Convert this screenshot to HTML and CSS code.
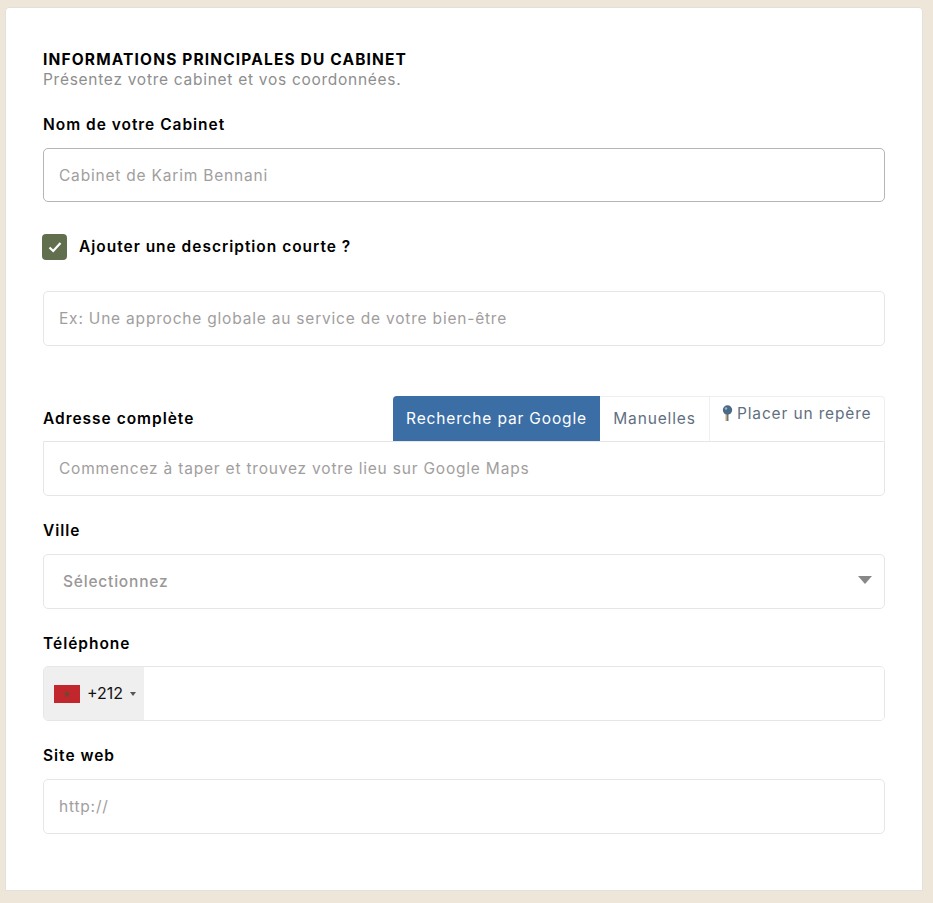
FILE: index.html
```html
<!DOCTYPE html>
<html lang="fr">

<head>
 <meta charset="UTF-8">
 <meta name="viewport" content="width=device-width, initial-scale=1.0">
 <title>Informations du cabinet</title>
 <link rel="stylesheet" href="styles.css">
</head>

<body>

 <form class="card">
  <header class="intro">
   <h2>INFORMATIONS PRINCIPALES DU CABINET</h2>
   <p>Présentez votre cabinet et vos coordonnées.</p>
  </header>

  <label class="label label-name" for="name">Nom de votre Cabinet</label>
  <input class="field field-strong" id="name" type="text" placeholder="Cabinet de Karim Bennani">

  <div class="check-row">
   <span class="check">
    <svg width="14" height="12" viewBox="0 0 14 12"><path d="M1.5 6.5 5.2 10 12.5 2" fill="none" stroke="#fff" stroke-width="2.2"/></svg>
   </span>
   <span class="label">Ajouter une description courte ?</span>
  </div>

  <input class="field" type="text" placeholder="Ex: Une approche globale au service de votre bien-être">

  <div class="address-head">
   <span class="label">Adresse complète</span>
   <div class="tabs">
    <span class="tab tab-active">Recherche par Google</span>
    <span class="tab tab-manual">Manuelles</span>
    <span class="tab tab-pin">
     <svg width="11" height="17" viewBox="0 0 11 17"><rect x="3.5" y="8" width="1.5" height="8" fill="#e2a04e"/><rect x="5" y="8" width="1.5" height="8" fill="#4f7fa8"/><circle cx="5.5" cy="5" r="4.7" fill="#4a6a85"/><circle cx="4" cy="3.5" r="1.2" fill="#9db6cb"/></svg>
     Placer un repère
    </span>
   </div>
  </div>
  <input class="field field-address" type="text" placeholder="Commencez à taper et trouvez votre lieu sur Google Maps">

  <label class="label label-row" for="city">Ville</label>
  <div class="select-wrap">
   <select class="field field-select" id="city">
    <option>Sélectionnez</option>
   </select>
   <span class="select-arrow"></span>
  </div>

  <label class="label label-row label-phone" for="phone">Téléphone</label>
  <div class="phone">
   <div class="dial">
    <span class="flag">
     <svg width="8" height="8" viewBox="0 0 10 10"><path d="M5 .5 6.2 3.6 9.5 3.8 6.9 5.9 7.8 9.2 5 7.3 2.2 9.2 3.1 5.9.5 3.8 3.8 3.6Z" fill="#6b4a30"/></svg>
    </span>
    <span class="dial-code">+212</span>
    <span class="dial-arrow"></span>
   </div>
   <input id="phone" type="tel">
  </div>

  <label class="label label-row" for="web">Site web</label>
  <input class="field" id="web" type="text" placeholder="http://">
 </form>

</body>

</html>
```

FILE: styles.css
```css
:root {
 --main-font: "Inter", "Open Sans", sans-serif;
 --line-color: #e6e6e6;
 --hint-color: #a19e9e;
}

html {
 box-sizing: border-box;
 font-family: var(--main-font);
}

*,
*::before,
*::after {
 box-sizing: inherit;
}

body {
 margin: 0;
 height: 903px;
 padding: 7px 10px 12px 5px;
 background-color: #efe6da;
 overflow: hidden;
}

.card {
 display: block;
 height: 884px;
 padding: 43px 37px 0;
 background-color: #fff;
 border: 1px solid #e2e0dc;
 border-radius: 4px 4px 0 0;
}

/* - - - - Titre - - - - */
.intro h2 {
 margin: 0;
 font-size: 15.5px;
 line-height: 18px;
 font-weight: 700;
 color: #000;
 letter-spacing: 1.15px;
}

.intro p {
 margin: 2px 0 0;
 font-size: 15.5px;
 line-height: 18px;
 color: #8e8e8e;
 letter-spacing: 0.72px;
}

/* - - - - Champs - - - - */
.label {
 display: block;
 font-size: 15.5px;
 line-height: 20px;
 font-weight: 600;
 color: #000;
 letter-spacing: 0.98px;
}

.label-name {
 margin: 26px 0 13px;
}

.label-row {
 margin: 25px 0 13px;
}

.label-phone {
 margin-bottom: 12px;
}

.field {
 display: block;
 width: 100%;
 height: 55px;
 padding: 0 15px;
 border: 1px solid var(--line-color);
 border-radius: 5px;
 background-color: #fff;
 font-family: var(--main-font);
 font-size: 15.5px;
 letter-spacing: 0.8px;
 color: var(--hint-color);
 outline: none;
}

.field::placeholder {
 color: var(--hint-color);
 opacity: 1;
}

.field-strong {
 height: 54px;
 border-color: #b5b5b5;
}

/* - - - - Case à cocher - - - - */
.check-row {
 display: flex;
 align-items: center;
 gap: 12px;
 margin: 32px 0 31px -1px;
 height: 26px;
}

.check {
 display: flex;
 align-items: center;
 justify-content: center;
 width: 25px;
 height: 26px;
 border-radius: 4px;
 background-color: #626f4e;
}

/* - - - - Adresse - - - - */
.address-head {
 display: flex;
 align-items: flex-end;
 justify-content: space-between;
 margin-top: 50px;
}

.address-head .label {
 padding-bottom: 12px;
}

.tabs {
 display: flex;
 height: 45px;
 border: 1px solid #efefef;
 border-bottom: 0;
 border-radius: 4px 4px 0 0;
}

.tab {
 display: flex;
 align-items: center;
 font-size: 15.5px;
 letter-spacing: 0.85px;
 color: #5f6f7f;
}

.tab-active {
 justify-content: center;
 width: 207px;
 margin: -1px 0 0 -1px;
 height: 45px;
 background-color: #3b6ea5;
 border-radius: 4px 0 0 0;
 color: #fff;
}

.tab-manual {
 justify-content: center;
 width: 109px;
 padding-bottom: 2px;
}

.tab-pin {
 align-items: flex-start;
 gap: 4px;
 width: 175px;
 padding: 7px 0 0 12px;
 border-left: 1px solid #efefef;
 white-space: nowrap;
}

.tab-pin svg {
 margin-top: 1px;
}

.field-address {
 border-radius: 0 0 5px 5px;
}

/* - - - - Select - - - - */
.select-wrap {
 position: relative;
}

.field-select {
 appearance: none;
 padding: 0 19px;
 font-weight: 500;
 color: #9a9797;
}

.select-arrow {
 position: absolute;
 top: 22px;
 right: 13px;
 border-left: 7px solid transparent;
 border-right: 7px solid transparent;
 border-top: 8px solid #888;
}

/* - - - - Téléphone - - - - */
.phone {
 display: flex;
 height: 55px;
 border: 1px solid var(--line-color);
 border-radius: 5px;
 overflow: hidden;
}

.dial {
 display: flex;
 align-items: center;
 width: 100px;
 padding-left: 10px;
 background-color: #efefef;
}

.flag {
 display: flex;
 align-items: center;
 justify-content: center;
 width: 26px;
 height: 18px;
 background-color: #c1272d;
}

.dial-code {
 margin-left: 7px;
 margin-bottom: 1px;
 font-size: 16px;
 color: #111;
}

.dial-arrow {
 margin-left: 7px;
 border-left: 3px solid transparent;
 border-right: 3px solid transparent;
 border-top: 4px solid #555;
}

.phone input {
 flex: 1;
 border: 0;
 outline: none;
}
```
